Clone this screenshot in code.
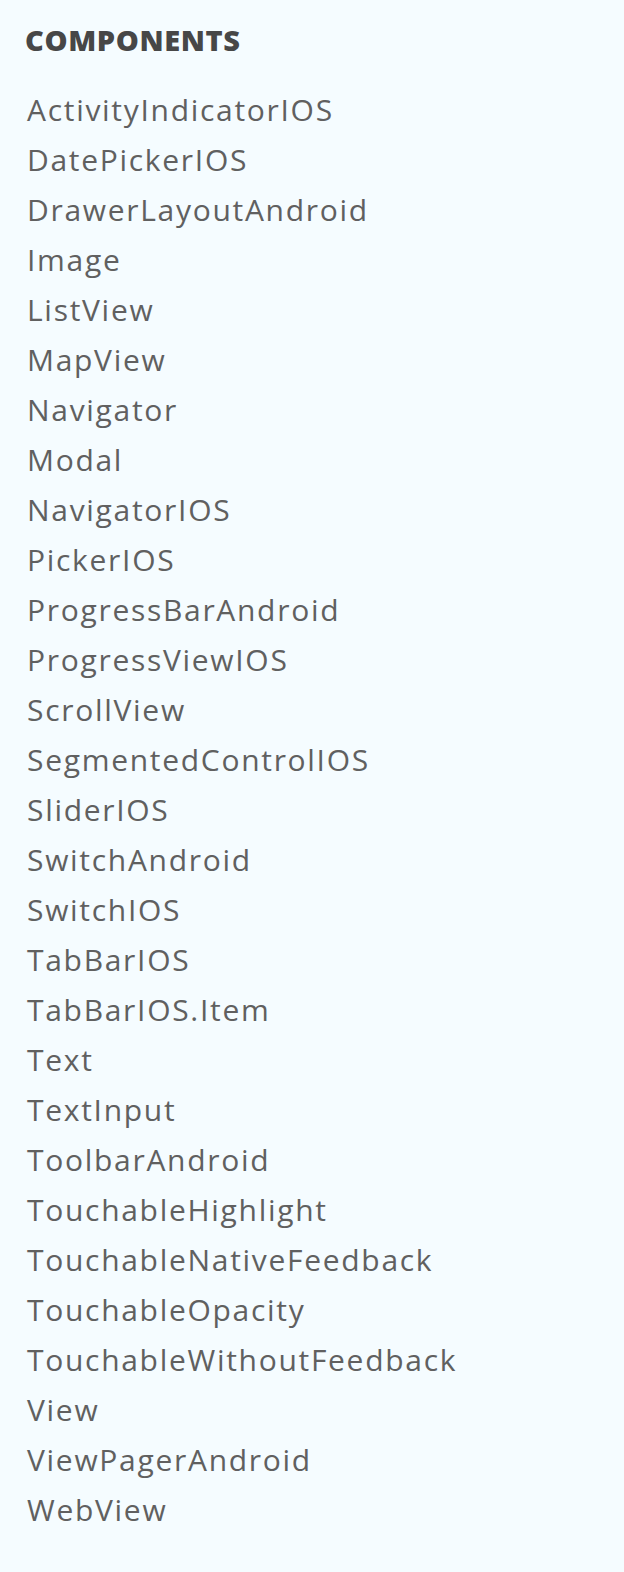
const components = [
  "ActivityIndicatorIOS",
  "DatePickerIOS",
  "DrawerLayoutAndroid",
  "Image",
  "ListView",
  "MapView",
  "Navigator",
  "Modal",
  "NavigatorIOS",
  "PickerIOS",
  "ProgressBarAndroid",
  "ProgressViewIOS",
  "ScrollView",
  "SegmentedControlIOS",
  "SliderIOS",
  "SwitchAndroid",
  "SwitchIOS",
  "TabBarIOS",
  "TabBarIOS.Item",
  "Text",
  "TextInput",
  "ToolbarAndroid",
  "TouchableHighlight",
  "TouchableNativeFeedback",
  "TouchableOpacity",
  "TouchableWithoutFeedback",
  "View",
  "ViewPagerAndroid",
  "WebView",
]

export default function App() {
  return (
    <div className="min-h-[1572px] w-full bg-[#f5fcff] px-[25px] pt-[18px] font-['Open_Sans',sans-serif]">
      <h2 className="text-[29px] font-extrabold uppercase leading-[44px] tracking-[0.6px] text-[#474747]">
        Components
      </h2>
      <ul className="mt-[23px] pl-[2px]">
        {components.map((name) => (
          <li key={name} className="text-[30px] leading-[50px] tracking-[1.7px] text-[#606060]">
            {name}
          </li>
        ))}
      </ul>
    </div>
  )
}
